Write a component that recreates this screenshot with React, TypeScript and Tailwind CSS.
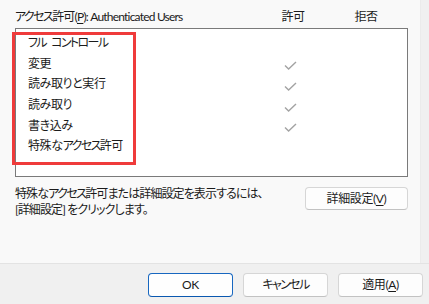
import { Fragment } from "react";

const rows = [
  { label: "フル コントロール", allow: false },
  { label: "変更", allow: true },
  { label: "読み取りと実行", allow: true },
  { label: "読み取り", allow: true },
  { label: "書き込み", allow: true },
  { label: "特殊なアクセス許可", allow: false },
];

// カタカナはUIフォントより幅が広いので詰める
const jp = (text: string) =>
  text.split(/([ァ-ヶー]+| )/).map((part, i) => {
    if (part === " ") {
      return (
        <span key={i} className="inline-block w-[5px]">
          {" "}
        </span>
      );
    }
    return /[ァ-ヶー]/.test(part) ? (
      <span key={i} className="tracking-[-1.6px]">
        {part}
      </span>
    ) : (
      part
    );
  });

const Check = () => (
  <svg width="13" height="9" viewBox="0 0 13 9" fill="none">
    <polyline points="1,4.5 4.6,8 12,1" stroke="#a3a3a3" strokeWidth="1.4" />
  </svg>
);

const Mnemonic = ({ children }: { children: string }) => (
  <Fragment>
    (<span className="underline underline-offset-2">{children}</span>)
  </Fragment>
);

const DialogButton = ({ children, primary }: { children: React.ReactNode; primary?: boolean }) => (
  <button
    className={`w-[85px] h-[24px] rounded-[4px] text-[12px] leading-none text-[#1b1b1b] ${
      primary
        ? "bg-[#fefefe] border border-[#1767c0] border-b-[#0a58b0]"
        : "bg-[#fdfdfd] border border-[#d6d6d6] border-b-[#c2c2c2]"
    }`}
  >
    {children}
  </button>
);

export default function App() {
  return (
    <div className="w-[429px] h-[304px] bg-[#f0f0f0] flex flex-col text-[12px] tracking-[-0.4px] text-[#1b1b1b] font-['Lato','Noto_Sans_CJK_JP',sans-serif] [font-feature-settings:'palt']">
      {/* 上部パネル */}
      <div className="flex h-[264px] border-b border-[#e3e3e3]">
        <div className="w-[421px] bg-[#f9f9f9] border-r border-[#ebebeb] pl-[15px]">
          <div className="flex pt-[8px] h-[28px] leading-[17px]">
            <div className="w-[250px] tracking-[-0.8px]">
              {jp("アクセス許可")}
              <Mnemonic>P</Mnemonic>: Authenticated Users
            </div>
            <div className="w-[56px] text-center">許可</div>
            <div className="w-[56px] ml-[17px] text-center">拒否</div>
          </div>

          {/* 一覧 */}
          <div className="relative w-[393px] h-[149px] bg-white border border-[#7a7a7a] pt-[4px]">
            {rows.map((row) => (
              <div key={row.label} className="flex items-center h-[20.6px]">
                <div className="w-[246px] pl-[12px]">{jp(row.label)}</div>
                <div className="w-[56px] flex justify-center pt-[4px]">{row.allow && <Check />}</div>
              </div>
            ))}
            <div className="absolute left-[-4px] top-[3px] w-[124px] h-[133px] border-[3px] border-[#ef3b3b]" />
          </div>

          <div className="flex items-start mt-[9px] w-[393px]">
            <div className="flex-1 leading-[16px] tracking-[-0.9px]">
              <div>{jp("特殊なアクセス許可または詳細設定を表示するには、")}</div>
              <div>[詳細設定] をクリックします。</div>
            </div>
            <button className="mt-[1px] w-[103px] h-[23px] rounded-[4px] bg-[#fdfdfd] border border-[#d6d6d6] border-b-[#c2c2c2] text-[12px] leading-none">
              詳細設定<Mnemonic>V</Mnemonic>
            </button>
          </div>
        </div>
      </div>

      {/* ボタン */}
      <div className="flex justify-end gap-[10px] pt-[9px] pr-[6px]">
        <DialogButton primary>OK</DialogButton>
        <DialogButton>{jp("キャンセル")}</DialogButton>
        <DialogButton>
          適用<Mnemonic>A</Mnemonic>
        </DialogButton>
      </div>
    </div>
  );
}
